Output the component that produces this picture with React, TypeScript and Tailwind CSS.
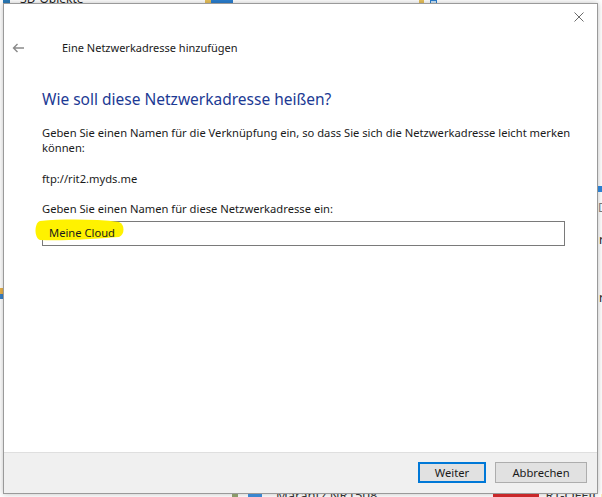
import React from 'react';

const font = { fontFamily: '"Segoe UI", "Noto Sans", "Liberation Sans", sans-serif' };

export default function App() {
  return (
    <div className="w-[602px] h-[497px] overflow-hidden bg-white flex flex-col" style={font}>
      {/* explorer behind the dialog: top edge */}
      <div className="h-[3px] shrink-0 overflow-hidden flex items-end">
        <div className="ml-[3px] w-[7px] h-[7px] mb-[-4px] bg-[#2a7ab8]" />
        <span className="ml-[10px] mb-[-3px] text-[12px] leading-[14px] text-[#222]">3D-Objekte</span>
        <div className="ml-[121px] w-[6px] h-[3px] bg-[#e8c15a]" />
        <div className="w-[22px] h-[3px] bg-[#2b7fd0]" />
        <div className="ml-[186px] w-[5px] h-[3px] bg-[#e8c15a]" />
        <div className="ml-[6px] w-[7px] h-[3px] border border-b-0 border-[#2b7fd0] bg-[#cde4f7]" />
      </div>

      <div className="h-[491px] shrink-0 flex">
        {/* left edge */}
        <div className="w-[3px] shrink-0 flex flex-col">
          <div className="mt-[285px] h-[6px] bg-[#e8b24a]" />
          <div className="h-[5px] bg-[#3a82c8]" />
        </div>

        {/* dialog window */}
        <div className="w-[595px] shrink-0 bg-white border border-[#9a9a9a] shadow-[0_0_6px_rgba(0,0,0,0.25)] flex flex-col">
          <div className="h-[30px] flex justify-end items-start pt-[8px] pr-[13px]">
            <svg width="10" height="10" viewBox="0 0 10 10">
              <path d="M0.5 0.5 L9.5 9.5 M9.5 0.5 L0.5 9.5" stroke="#6b6b6b" strokeWidth="1" fill="none" />
            </svg>
          </div>

          <div className="h-[20px] mt-[4px] flex items-center">
            <svg className="ml-[8px]" width="13" height="10" viewBox="0 0 13 10">
              <path d="M12 5 H1.5 M5.5 1 L1.5 5 L5.5 9" stroke="#8a8a8a" strokeWidth="1.4" fill="none" />
            </svg>
            <span className="ml-[37px] text-[11px] leading-[20px] text-[#1a1a1a]">Eine Netzwerkadresse hinzufügen</span>
          </div>

          <div className="pl-[38px] pr-[8px] text-[11.2px] leading-[15px] text-[#1a1a1a]">
            <h1 className="mt-[30px] text-[15.5px] leading-[22px] text-[#1c3a94] font-normal">
              Wie soll diese Netzwerkadresse heißen?
            </h1>
            <p className="mt-[15px]">
              Geben Sie einen Namen für die Verknüpfung ein, so dass Sie sich die Netzwerkadresse leicht merken können:
            </p>
            <p className="mt-[16px]">ftp://rit2.myds.me</p>
            <p className="mt-[15px]">Geben Sie einen Namen für diese Netzwerkadresse ein:</p>
            <div className="relative mt-[5px] w-[523px] h-[25px] border border-[#7a7a7a] flex items-start pt-[3px]">
              {/* yellow marker stroke drawn over the field */}
              <svg className="absolute left-[-10px] top-[-4px]" width="94" height="25" viewBox="0 0 94 25">
                <path
                  d="M7 3 C 30 1, 62 1, 86 4 C 92 6, 92 17, 86 19 C 60 21, 30 23, 7 22 C 1 20, 1 5, 7 3 Z"
                  fill="#fff200"
                />
              </svg>
              <span className="relative ml-[6px] text-[#1a1a1a]">Meine Cloud</span>
            </div>
          </div>

          <div className="flex-1" />

          <div className="h-[41px] bg-[#f0f0f0] border-t border-[#dfdfdf] flex justify-end items-start pt-[9px] pr-[10px] gap-[9px]">
            <button className="w-[68px] h-[21px] bg-[#e1e1e1] border-2 border-[#0078d7] text-[11.2px] text-[#1a1a1a] leading-none">
              Weiter
            </button>
            <button className="w-[92px] h-[21px] bg-[#e1e1e1] border border-[#adadad] text-[11.2px] text-[#1a1a1a] leading-none">
              Abbrechen
            </button>
          </div>
        </div>

        {/* right edge */}
        <div className="flex-1 overflow-hidden flex flex-col text-[12px] leading-[14px] text-[#222]">
          <div className="mt-[183px] h-[6px] bg-[#2b7fd0]" />
          <span className="mt-[9px] text-[#777]">D</span>
          <span className="mt-[18px] ml-[1px]">rk</span>
          <span className="mt-[44px] ml-[1px]">rk</span>
        </div>
      </div>

      {/* bottom edge */}
      <div className="flex-1 overflow-hidden flex items-start">
        <div className="ml-[232px] shrink-0 w-[6px] h-[3px] bg-[#8a9a6a]" />
        <div className="ml-[10px] shrink-0 w-[14px] h-[3px] bg-[#3a86cf]" />
        <span className="ml-[14px] shrink-0 mt-[-6px] text-[13px] leading-[15px] text-[#333] whitespace-nowrap">Marantz NR1508</span>
        <div className="ml-[116px] shrink-0 w-[46px] h-[3px] bg-[#c8282a]" />
        <span className="ml-[6px] shrink-0 mt-[-6px] text-[13px] leading-[15px] text-[#333] whitespace-nowrap">RT-OFFICE M</span>
      </div>
    </div>
  );
}
